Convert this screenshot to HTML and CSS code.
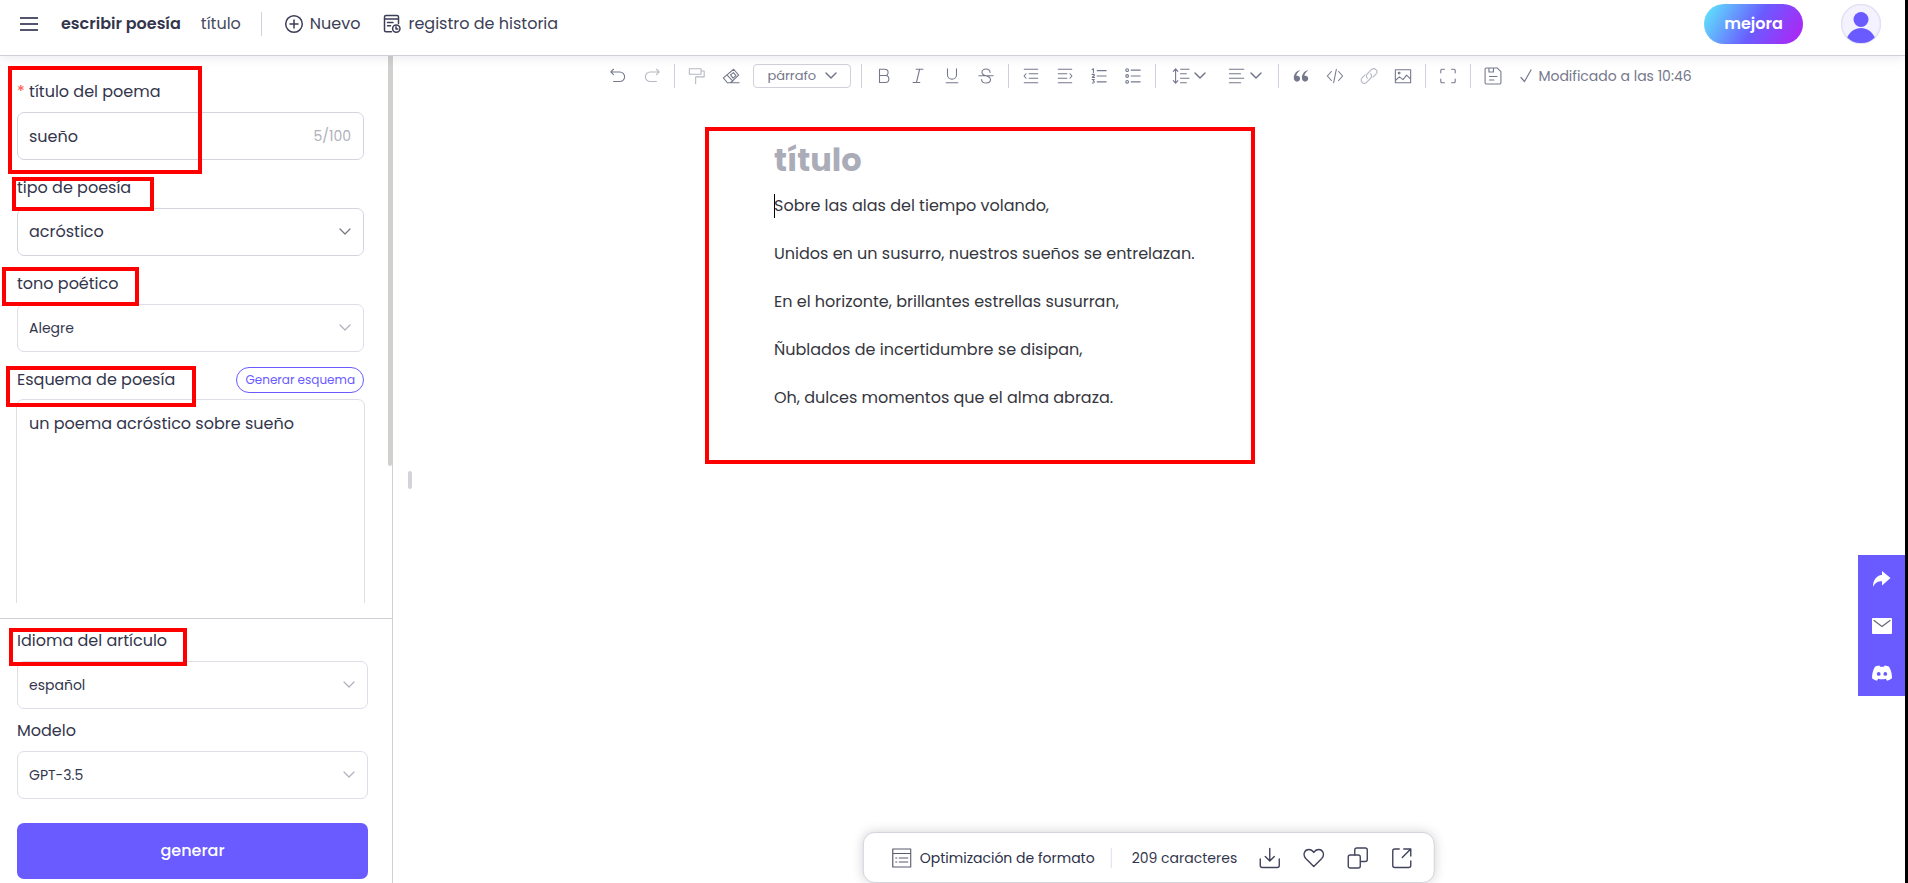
FILE: index.html
```html
<!DOCTYPE html>
<html lang="es">
<head>
<meta charset="utf-8">
<title>escribir poesía</title>
<link rel="stylesheet" href="styles.css">
</head>
<body>
<div class="app">
  <header class="topbar">
    <button class="icon-btn menu" aria-label="Menú"><svg width="18" height="16" viewBox="0 0 18 16"><path d="M0 2h18M0 8h18M0 14h18"/></svg></button>
    <h1 class="brand">escribir poesía</h1>
    <span class="doc-name">título</span>
    <span class="rule"></span>
    <button class="nav-btn"><svg width="20" height="20" viewBox="0 0 20 20"><circle cx="10" cy="10" r="8.3"/><path d="M10 6v8M6 10h8"/></svg>Nuevo</button>
    <button class="nav-btn history"><svg width="20" height="20" viewBox="0 0 20 20"><path d="M9.500 17.700H4a1.500 1.500 0 0 1-1.500-1.500V3A1.500 1.500 0 0 1 4 1.500h11A1.500 1.500 0 0 1 16.500 3v6.500M2.500 5h14M5.500 8.500h5.500M5.500 11.700h3"/><circle cx="14.300" cy="14.600" r="3.700"/><path d="M14 12.700v2.200h1.800"/></svg>registro de historia</button>
    <button class="upgrade">mejora</button>
    <button class="avatar" aria-label="Cuenta"><svg width="40" height="40" viewBox="0 0 40 40"><circle cx="20" cy="20" r="19.500" fill="#f4f2ff" stroke="#e3e0f2"/><circle cx="20" cy="15.500" r="7.500"/><path d="M6.200 33.500C9 27.500 14 24 20 24s11 3.500 13.800 9.500A19 19 0 0 1 20 39a19 19 0 0 1-13.800-5.500z"/></svg></button>
  </header>

  <div class="body">
    <aside class="side">
      <form class="fields">
        <div class="field">
          <label for="poem-title"><span class="req">*</span> título del poema</label>
          <div class="control dark"><input id="poem-title" value="sueño"><span class="count">5/100</span></div>
        </div>
        <div class="field">
          <label for="kind">tipo de poesía</label>
          <div class="control dark"><select id="kind" class="large"><option>acróstico</option></select><svg class="chev" width="12" height="8" viewBox="0 0 12 8"><path d="M1 1l5 5 5-5"/></svg></div>
        </div>
        <div class="field">
          <label for="tone">tono poético</label>
          <div class="control"><select id="tone"><option>Alegre</option></select><svg class="chev" width="12" height="8" viewBox="0 0 12 8"><path d="M1 1l5 5 5-5"/></svg></div>
        </div>
        <div class="field">
          <div class="label-row"><label for="outline">Esquema de poesía</label><button type="button" class="outline-btn">Generar esquema</button></div>
          <textarea id="outline">un poema acróstico sobre sueño</textarea>
        </div>
        <span class="scroll-thumb"></span>
      </form>
      <div class="side-foot">
        <div class="field">
          <label for="lang">Idioma del artículo</label>
          <div class="control"><select id="lang"><option>español</option></select><svg class="chev" width="12" height="8" viewBox="0 0 12 8"><path d="M1 1l5 5 5-5"/></svg></div>
        </div>
        <div class="field">
          <label for="model">Modelo</label>
          <div class="control"><select id="model"><option>GPT-3.5</option></select><svg class="chev" width="12" height="8" viewBox="0 0 12 8"><path d="M1 1l5 5 5-5"/></svg></div>
        </div>
        <button class="generate">generar</button>
      </div>
    </aside>

    <main class="editor">
      <span class="grip"></span>
      <div class="toolbar">
        <button class="tool" aria-label="Deshacer"><svg viewBox="0 0 20 20"><path d="M2.500 5.500H12a5.300 5.300 0 0 1 0 10.700H5M5 2.500l-3 3 3 3"/></svg></button>
        <button class="tool off" aria-label="Rehacer"><svg viewBox="0 0 20 20"><path d="M17.500 5.500H8a5.300 5.300 0 0 0 0 10.700h7M15 2.500l3 3-3 3"/></svg></button>
        <span class="sep"></span>
        <button class="tool off" aria-label="Copiar formato"><svg viewBox="0 0 20 20"><path d="M1.500 2h13v6h-13zM14.500 4.500h3.500V11H8.500v7.500"/></svg></button>
        <button class="tool" aria-label="Borrar formato"><svg viewBox="0 0 20 20"><path d="M1.500 12L13 2.500l5.500 6.500-9 8.500H6zM5.500 8.700l6.500 7M9.500 8.800l3.200-2.600 2.800 3.300-3.200 2.800zM9.500 17.500h9.500"/></svg></button>
        <div class="style-pick"><select aria-label="Estilo"><option>párrafo</option></select><svg class="chev" width="12" height="8" viewBox="0 0 12 8"><path d="M1 1l5 5 5-5"/></svg></div>
        <span class="sep"></span>
        <button class="tool" aria-label="Negrita"><svg viewBox="0 0 20 20"><path d="M5 2.500h6a3.500 3.500 0 0 1 0 7H5zM5 9.500h6.500a3.900 3.900 0 0 1 0 7.800H5z"/></svg></button>
        <button class="tool" aria-label="Cursiva"><svg viewBox="0 0 20 20"><path d="M8 2.500h7.500M4.500 17.300H12M11.800 2.500L8.200 17.300"/></svg></button>
        <button class="tool" aria-label="Subrayado"><svg viewBox="0 0 20 20"><path d="M5 2v6.500a5 5 0 0 0 10 0V2M3.500 17.500h13"/></svg></button>
        <button class="tool" aria-label="Tachado"><svg viewBox="0 0 20 20"><path d="M14.500 6A4.500 4 0 0 0 10 2.300C7.500 2.300 5.500 3.500 5.500 5.700c0 2.500 2 3.300 4.500 4.100 3 .9 5 1.700 5 4.200 0 2.400-2 3.800-4.800 3.800-3 0-5-1.500-5.200-4M2 9.700h16"/></svg></button>
        <span class="sep"></span>
        <button class="tool" aria-label="Reducir sangría"><svg viewBox="0 0 20 20"><path d="M2.500 2.500h15M8 7.500h9.500M8 12.500h9.500M2.500 17.500h15M4.500 7.500L2.300 10l2.200 2.500"/></svg></button>
        <button class="tool" aria-label="Aumentar sangría"><svg viewBox="0 0 20 20"><path d="M2.500 2.500h15M2.500 7.500H12M2.500 12.500H12M2.500 17.500h15M15.500 7.500l2.200 2.500-2.200 2.500"/></svg></button>
        <button class="tool" aria-label="Lista numerada"><svg viewBox="0 0 20 20"><path d="M8 4h10M8 10h10M8 16.500h10M2.500 2.700l1.300-.7v4M2.300 8.200h2.400v1L2.500 11.500h2.600M2.400 13.800h2.400l-1.300 1.800c2 0 1.600 2.500-.9 2.200"/></svg></button>
        <button class="tool" aria-label="Lista"><svg viewBox="0 0 20 20"><path d="M8 3.500h10M8 10h10M8 16.500h10"/><circle cx="3.500" cy="3.500" r="1.500"/><circle cx="3.500" cy="10" r="1.500"/><circle cx="3.500" cy="16.500" r="1.500"/></svg></button>
        <span class="sep"></span>
        <button class="tool pair" aria-label="Interlineado"><svg viewBox="0 0 20 20"><path d="M4 2v16M1.500 4.800L4 2l2.500 2.800M1.500 15.200L4 18l2.500-2.800M9.500 2.500h9.500M9.500 7.500h6.500M9.500 12.500h9.500M9.500 17.500h6.500"/></svg><svg class="chev" viewBox="0 0 12 8"><path d="M1 1l5 5 5-5"/></svg></button>
        <button class="tool pair" aria-label="Alineación"><svg viewBox="0 0 20 20"><path d="M1.500 2.500h16M1.500 7.500H14M1.500 12.500h16M1.500 17.500H14"/></svg><svg class="chev" viewBox="0 0 12 8"><path d="M1 1l5 5 5-5"/></svg></button>
        <span class="sep"></span>
        <button class="tool" aria-label="Cita"><svg viewBox="0 0 20 20"><path class="solid" d="M8.500 3.500C4.500 4.500 2 8 2 12c0 2.700 1.500 4.300 3.500 4.300s3.500-1.500 3.500-3.400-1.400-3.200-3.200-3.200c-.4 0-.8.100-1 .2.300-2.300 1.700-4.400 3.900-5.600zM17.500 3.500C13.500 4.500 11 8 11 12c0 2.700 1.500 4.300 3.500 4.300s3.500-1.500 3.500-3.400-1.400-3.200-3.200-3.200c-.4 0-.8.100-1 .2.300-2.300 1.700-4.400 3.900-5.600z"/></svg></button>
        <button class="tool" aria-label="Código"><svg viewBox="0 0 20 20"><path d="M6 5l-4.500 5L6 15M14 5l4.500 5-4.500 5M11.500 2.500l-3 15"/></svg></button>
        <button class="tool off" aria-label="Enlace"><svg viewBox="0 0 20 20"><path d="M8.200 12.500a3.500 3.500 0 0 1 0-5l4.500-4.500a3.500 3.500 0 0 1 5 5l-3.300 3.300M11.800 7.500a3.500 3.500 0 0 1 0 5L7.300 17a3.500 3.500 0 0 1-5-5l3.300-3.300"/></svg></button>
        <button class="tool" aria-label="Imagen"><svg viewBox="0 0 20 20"><path d="M1.500 3h17v14.500h-17zM1.500 15l4.500-4 4 3 4-5 4.500 4.500"/><circle cx="5.700" cy="6.800" r="1"/></svg></button>
        <span class="sep"></span>
        <button class="tool" aria-label="Pantalla completa"><svg viewBox="0 0 20 20"><path d="M2 6.500V4a1.500 1.500 0 0 1 1.500-1.500H6M14 2.500h2.500A1.500 1.500 0 0 1 18 4v2.500M18 13.500V16a1.500 1.500 0 0 1-1.500 1.500H14M6 17.500H3.500A1.500 1.500 0 0 1 2 16v-2.500"/></svg></button>
        <span class="sep"></span>
        <button class="tool" aria-label="Guardar"><svg viewBox="0 0 20 20"><path d="M2.500 1.200h12.300l4 4v12.300a1.300 1.300 0 0 1-1.300 1.300h-15a1.300 1.300 0 0 1-1.300-1.300v-15a1.300 1.300 0 0 1 1.300-1.300zM5.500 1.200v4.300h5V1.200M6 10.500h8.500M6 14.500h5"/></svg></button>
        <span class="saved"><svg width="12" height="14" viewBox="0 0 12 14"><path d="M1 8.500l3.500 4L11 1"/></svg>Modificado a las 10:46</span>
      </div>

      <article class="page">
        <h2>título</h2>
        <p><span class="caret"></span>Sobre las alas del tiempo volando,</p>
        <p>Unidos en un susurro, nuestros sueños se entrelazan.</p>
        <p>En el horizonte, brillantes estrellas susurran,</p>
        <p>Ñublados de incertidumbre se disipan,</p>
        <p>Oh, dulces momentos que el alma abraza.</p>
      </article>

      <div class="dock">
        <button class="format"><svg width="20" height="20" viewBox="0 0 20 20"><path d="M1 1h18v18H1zM1 5.500h18M4 10h1M7.500 10H16M4 14h1M7.500 14H16"/></svg>Optimización de formato</button>
        <span class="dock-rule"></span>
        <span class="chars">209 caracteres</span>
        <button aria-label="Descargar"><svg width="22" height="22" viewBox="0 0 22 22"><path d="M11 1.500v12M6.500 9.500L11 14l4.500-4.500M1.500 12v6.500a2 2 0 0 0 2 2h15a2 2 0 0 0 2-2V12"/></svg></button>
        <button aria-label="Favorito"><svg width="22" height="22" viewBox="0 0 22 22"><path d="M11 19.500L3 11.500C-.5 7.500 2 2.500 6 2.500c2 0 3.800 1 5 3 1.200-2 3-3 5-3 4 0 6.500 5 3 9z"/></svg></button>
        <button aria-label="Copiar"><svg width="22" height="22" viewBox="0 0 22 22"><path d="M8 8V3a2 2 0 0 1 2-2h8.500a2 2 0 0 1 2 2v9.500a2 2 0 0 1-2 2H14"/><rect x="1.500" y="8" width="12" height="13" rx="2"/></svg></button>
        <button aria-label="Abrir"><svg width="22" height="22" viewBox="0 0 22 22"><path d="M8.500 2H4a2 2 0 0 0-2 2v14.500a2 2 0 0 0 2 2h14a2 2 0 0 0 2-2V14M13 2h7v7M20 2l-8.500 8.500"/></svg></button>
      </div>
    </main>
  </div>

  <nav class="share">
    <a href="#" aria-label="Compartir"><svg width="20" height="20" viewBox="0 0 20 20"><path d="M10 2l8.500 7-8.500 7.500v-4.200C6 12.300 3 13.500 1 18 1 11 4.500 6.500 10 6z"/></svg></a>
    <a href="#" aria-label="Correo"><svg width="20" height="20" viewBox="0 0 20 20"><rect y="2" width="20" height="16" rx="1"/><path d="M2 4.500l8 6 8-6" fill="none" stroke="#68687a" stroke-width="1.200"/></svg></a>
    <a href="#" aria-label="Discord"><svg width="20" height="20" viewBox="0 0 20 20"><path fill-rule="evenodd" d="M7.300 2.500C5.500 2.700 4 3.200 3 3.800 1 7 0 10.500 0 15.300c1.500 1.200 3 1.900 5 2.400l1.200-2c2.500.7 5.100.7 7.600 0l1.200 2c2-.5 3.500-1.200 5-2.400 0-4.800-1-8.300-3-11.500-1-.6-2.500-1.100-4.300-1.300l-.8 1.300a12 12 0 0 0-3.800 0zM6.700 9a1.900 1.900 0 1 1 0 3.800 1.900 1.900 0 0 1 0-3.800zm6.600 0a1.900 1.900 0 1 1 0 3.800 1.900 1.900 0 0 1 0-3.800z"/></svg></a>
  </nav>

  <div class="marks" aria-hidden="true">
    <i class="mark m-title"></i><i class="mark m-kind"></i><i class="mark m-tone"></i>
    <i class="mark m-outline"></i><i class="mark m-lang"></i><i class="mark m-poem"></i>
  </div>
</div>
</body>
</html>
```
FILE: styles.css
```css
* { box-sizing: border-box; }
body {
  margin: 0;
  font: 16px/24px Poppins, Inter, sans-serif;
  color: #33364c;
  background: #fff;
}
button, input, select, textarea { font: inherit; color: inherit; }
button { border: 0; padding: 0; background: none; white-space: nowrap; }
svg { display: block; flex: none; fill: none; stroke: currentColor; stroke-width: 1.5; stroke-linecap: round; stroke-linejoin: round; }

.app {
  position: relative;
  display: flex;
  flex-direction: column;
  height: 100vh;
  border-right: 3px solid #000;
}

.topbar {
  position: relative;
  z-index: 1;
  display: flex;
  align-items: center;
  height: 56px;
  padding: 0 24px 7px 20px;
  border-bottom: 1px solid #d0d1dc;
  box-shadow: 0 2px 10px rgba(60, 60, 100, 0.1);
}
.menu svg { stroke-width: 2; stroke-linecap: butt; color: #52556c; }
.brand { margin: 0 20px 0 23px; font-size: 16px; font-weight: 600; }
.doc-name { color: #484b62; }
.rule { width: 1px; height: 24px; margin: 0 22px 0 20px; background: #d0d1dc; }
.nav-btn { display: flex; align-items: center; gap: 6px; margin-right: 22px; color: #3c3f57; }
.upgrade {
  width: 99px;
  height: 40px;
  margin-left: auto;
  border-radius: 20px;
  background: linear-gradient(120deg, #5fe3fb 4%, #6a5cff 52%, #a82af5 92%);
  color: #fff;
  font-weight: 600;
}
.avatar { margin-left: 38px; }
.avatar svg { fill: #695bff; stroke: none; }

.body { display: flex; flex: 1; min-height: 0; }
.side {
  display: flex;
  flex-direction: column;
  flex: none;
  width: 393px;
  border-right: 1px solid #d0d1d6;
}
.fields {
  position: relative;
  flex: 1;
  min-height: 0;
  margin-bottom: 15px;
  padding: 24px 28px 0 17px;
  overflow: hidden;
}
.field { margin-bottom: 16px; }
.field label { display: block; margin-bottom: 8px; }
.req { color: #ff4d3d; }
.control {
  display: flex;
  align-items: center;
  height: 48px;
  padding-right: 12px;
  border: 1px solid #dddee8;
  border-radius: 7px;
  color: #b0b1ba;
}
.control.dark { border-color: #d3d4de; color: #75767e; }
.control input, .control select {
  flex: 1;
  min-width: 0;
  height: 100%;
  padding: 0 0 0 11px;
  border: 0;
  outline: 0;
  background: none;
  appearance: none;
  color: #33364c;
}
.control select { font-size: 14px; }
.control select.large { font-size: 16px; }
.control svg { stroke-width: 1.2; }
.count { font-size: 14px; color: #b0b1ba; }
.label-row { display: flex; align-items: center; justify-content: space-between; height: 24px; margin-bottom: 7px; }
.field .label-row label { margin: 0; }
.outline-btn {
  height: 26px;
  padding: 0 8px;
  border: 1px solid #695bff;
  border-radius: 13px;
  color: #695bff;
  font-size: 12px;
  line-height: 16px;
}
.fields textarea {
  display: block;
  width: calc(100% + 2px);
  height: 320px;
  margin: 0 -1px;
  padding: 12px;
  border: 1px solid #dddee8;
  border-radius: 7px;
  outline: 0;
  resize: none;
}
.scroll-thumb {
  position: absolute;
  top: 0;
  right: 0;
  width: 4px;
  height: 410px;
  border-radius: 0 0 2px 2px;
  background: #d0d0cd;
}
.side-foot { padding: 10px 24px 4px 17px; border-top: 1px solid #d0d1d6; }
.side-foot .field { margin-bottom: 10px; }
.generate {
  display: block;
  width: 100%;
  height: 56px;
  margin-top: 24px;
  border-radius: 7px;
  background: #695bff;
  color: #fff;
  font-weight: 500;
}

.editor { position: relative; flex: 1; min-width: 0; }
.grip { position: absolute; top: 415px; left: 15px; width: 4px; height: 18px; border-radius: 2px; background: #d3d3da; }
.toolbar {
  display: flex;
  align-items: center;
  justify-content: center;
  height: 40px;
  padding-right: 5px;
  color: #75788c;
}
.tool { display: flex; align-items: center; justify-content: center; width: 34px; height: 24px; }
.tool svg { width: 18px; height: 18px; stroke-width: 1.2; }
.tool .solid { fill: currentColor; stroke: none; }
.tool.off { color: #b6b8c4; }
.tool.pair { gap: 4px; width: 56px; }
.tool .chev { width: 12px; height: 8px; stroke-width: 1.5; }
.sep { width: 1px; height: 24px; margin: 0 5px; background: #d0d1dc; }
.style-pick {
  display: flex;
  align-items: center;
  width: 98px;
  height: 24px;
  margin: 0 5px;
  padding: 0 13px;
  border: 1px solid #d0d1dc;
  border-radius: 4px;
}
.style-pick select {
  flex: 1;
  min-width: 0;
  padding: 0;
  border: 0;
  background: none;
  appearance: none;
  font-size: 13px;
  line-height: 20px;
}
.saved { display: flex; align-items: center; gap: 6px; margin-left: 10px; font-size: 14px; white-space: nowrap; }
.saved svg { stroke-width: 1.2; }

.page { max-width: 750px; margin: 0 auto; padding-top: 40px; color: #35363e; }
.page h2 { margin: 0 0 10px; font-size: 32px; line-height: 48px; font-weight: 700; color: #aaacb8; }
.page p { position: relative; margin: 0 0 24px; }
.caret { position: absolute; left: 0; width: 1px; height: 24px; background: #000; }

.dock {
  position: absolute;
  bottom: 0;
  left: 50%;
  transform: translateX(-50%);
  display: flex;
  align-items: center;
  height: 51px;
  padding: 0 21px 0 28px;
  border: 1px solid #d3d4de;
  border-radius: 12px;
  background: #fff;
  box-shadow: 0 0 12px rgba(0, 0, 0, 0.18);
  font-size: 14px;
  white-space: nowrap;
}
.dock button { margin-left: 22px; color: #41445c; }
.dock .format { display: flex; align-items: center; gap: 8px; margin: 0; color: #2d3048; }
.dock svg { stroke-width: 1.4; }
.dock .format svg { stroke-width: 1.2; color: #5b5d6b; }
.dock-rule { width: 1px; height: 20px; margin: 0 20px 0 16px; background: #dddee8; }

.share { position: absolute; right: 0; top: 555px; width: 47px; background: #695bff; }
.share a { display: flex; align-items: center; justify-content: center; height: 47px; color: #fff; }
.share svg { fill: currentColor; stroke: none; }

.mark { position: absolute; z-index: 2; border: 4px solid #f00; }
.m-title { left: 8px; top: 66px; width: 194px; height: 108px; }
.m-kind { left: 12px; top: 177px; width: 142px; height: 34px; }
.m-tone { left: 2px; top: 267px; width: 137px; height: 39px; }
.m-outline { left: 6px; top: 366px; width: 190px; height: 41px; }
.m-lang { left: 9px; top: 628px; width: 178px; height: 38px; }
.m-poem { left: 705px; top: 127px; width: 550px; height: 337px; }
```
